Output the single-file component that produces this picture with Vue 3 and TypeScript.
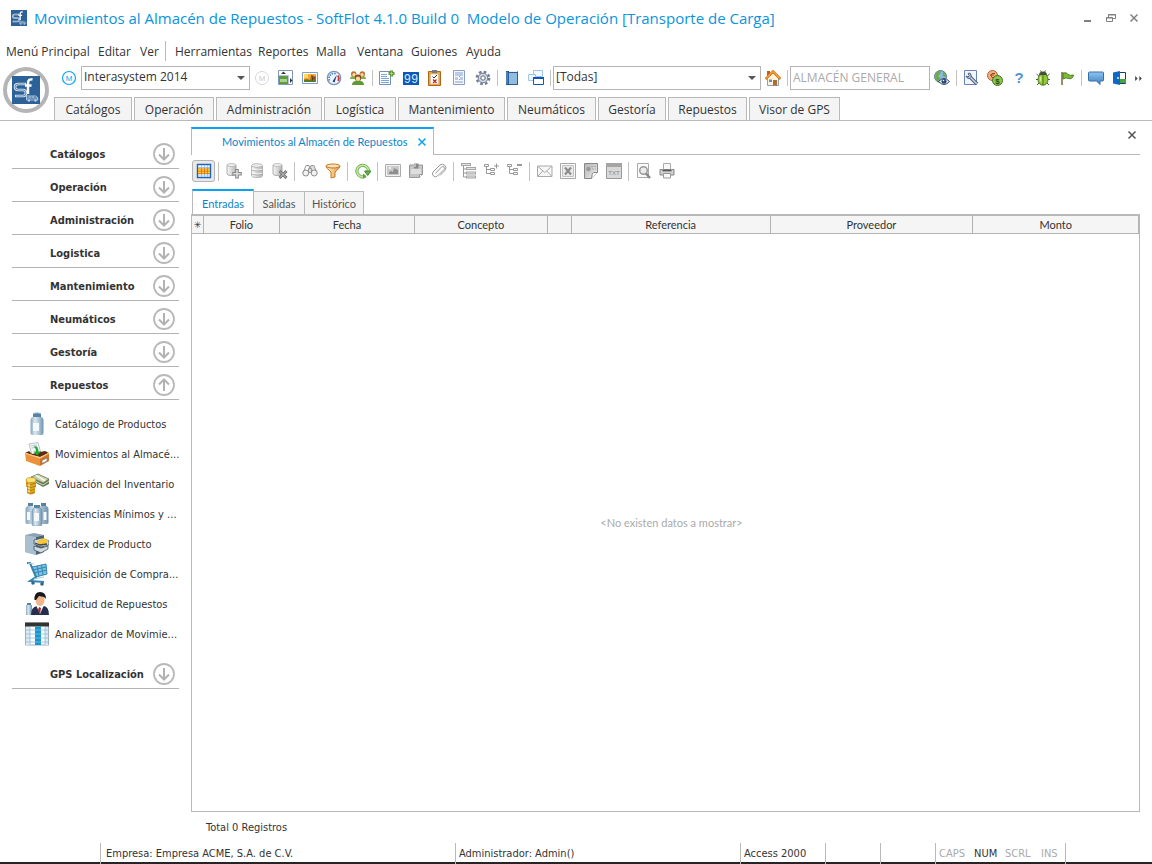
<script setup lang="ts">
import { h, ref } from 'vue'

interface Tool {
  icon: string
  label: string
}

interface Glyph {
  text: string
  y: number
  size: number
  fill: string
  x?: number
  family?: string
  weight?: number
}

// Lettering that sits on top of an icon's artwork.
const glyphs: Record<string, Glyph> = {
  'm-on': { text: 'M', y: 11, size: 8, fill: '#0ba5ec' },
  'm-off': { text: 'M', y: 11, size: 8, fill: '#cacaca' },
  counter: { text: '99', y: 13, size: 12, fill: '#d7ecff', family: 'Liberation Mono, monospace' },
  coins: { text: '$', x: 10.5, y: 13.5, size: 8, fill: '#24500c', weight: 700 },
  help: { text: '?', y: 13, size: 15, fill: '#4f93d8', weight: 700 },
  txt: { text: 'TXT', y: 12, size: 6, fill: '#888' },
}

const Icon = (props: { name: string }) => {
  const g = glyphs[props.name]
  return h('svg', { class: 'icon', viewBox: '0 0 16 16', 'aria-hidden': 'true' }, [
    h('use', { href: '#i-' + props.name }),
    g
      ? h('text', {
          x: g.x ?? 8,
          y: g.y,
          fill: g.fill,
          'text-anchor': 'middle',
          'font-family': g.family ?? 'Liberation Sans, sans-serif',
          'font-size': g.size,
          'font-weight': g.weight ?? 400,
        }, g.text)
      : null,
  ])
}
Icon.props = ['name']

const company = ref('Interasystem 2014')
const filter = ref('[Todas]')
const warehouse = ref('ALMACÉN GENERAL')

const menuLeft: string[] = ['Menú Principal', 'Editar', 'Ver']
const menuRight: string[] = ['Herramientas', 'Reportes', 'Malla', 'Ventana', 'Guiones', 'Ayuda']

const moduleTabs: string[] = [
  'Catálogos', 'Operación', 'Administración', 'Logística', 'Mantenimiento',
  'Neumáticos', 'Gestoría', 'Repuestos', 'Visor de GPS',
]

const toolsA: Tool[][] = [
  [
    { icon: 'm-off', label: 'Modelo' },
    { icon: 'layout', label: 'Distribución' },
    { icon: 'picture', label: 'Imagen' },
    { icon: 'gauge', label: 'Indicadores' },
    { icon: 'users', label: 'Usuarios' },
  ],
  [
    { icon: 'doc-add', label: 'Nuevo documento' },
    { icon: 'counter', label: 'Contador' },
    { icon: 'clipboard', label: 'Lista de tareas' },
    { icon: 'form', label: 'Formulario' },
    { icon: 'gear', label: 'Configuración' },
  ],
  [
    { icon: 'book', label: 'Libro' },
    { icon: 'windows', label: 'Ventanas' },
  ],
]

const toolsB: Tool[][] = [
  [
    { icon: 'wrench', label: 'Mantenimiento' },
    { icon: 'coins', label: 'Monedas' },
    { icon: 'help', label: 'Ayuda' },
    { icon: 'bug', label: 'Reportar error' },
    { icon: 'flag', label: 'Bandera' },
  ],
  [
    { icon: 'chat', label: 'Mensajes' },
    { icon: 'door', label: 'Salir' },
  ],
]

const gridTools: Tool[][] = [
  [
    { icon: 'db-add', label: 'Agregar registro' },
    { icon: 'db', label: 'Editar registro' },
    { icon: 'db-del', label: 'Eliminar registro' },
  ],
  [
    { icon: 'binoculars', label: 'Buscar' },
    { icon: 'funnel', label: 'Filtrar' },
  ],
  [{ icon: 'refresh', label: 'Actualizar' }],
  [
    { icon: 'picture-off', label: 'Imagen adjunta' },
    { icon: 'note', label: 'Nota' },
    { icon: 'clip', label: 'Adjuntar' },
  ],
  [
    { icon: 'tree', label: 'Agrupar' },
    { icon: 'tree-plus', label: 'Expandir' },
    { icon: 'tree-minus', label: 'Contraer' },
  ],
  [
    { icon: 'mail', label: 'Enviar por correo' },
    { icon: 'excel', label: 'Exportar a Excel' },
    { icon: 'html', label: 'Exportar a HTML' },
    { icon: 'txt', label: 'Exportar a texto' },
  ],
  [
    { icon: 'preview', label: 'Vista previa' },
    { icon: 'print', label: 'Imprimir' },
  ],
]

const sections: string[] = [
  'Catálogos', 'Operación', 'Administración', 'Logistica',
  'Mantenimiento', 'Neumáticos', 'Gestoría', 'Repuestos',
]
const openSection = ref('Repuestos')

const links: Tool[] = [
  { icon: 'jar', label: 'Catálogo de Productos' },
  { icon: 'drawer', label: 'Movimientos al Almacé...' },
  { icon: 'money', label: 'Valuación del Inventario' },
  { icon: 'jars', label: 'Existencias Mínimos y ...' },
  { icon: 'cabinet', label: 'Kardex de Producto' },
  { icon: 'cart', label: 'Requisición de Compra...' },
  { icon: 'person', label: 'Solicitud de Repuestos' },
  { icon: 'sheet', label: 'Analizador de Movimie...' },
]

const views: string[] = ['Entradas', 'Salidas', 'Histórico']
const activeView = ref('Entradas')
const columns: string[] = ['✳', 'Folio', 'Fecha', 'Concepto', '', 'Referencia', 'Proveedor', 'Monto']
</script>

<template>
  <div class="window">
    <svg class="defs" aria-hidden="true">
      <defs>
        <linearGradient id="gFunnel" x1="0" x2="1"><stop offset="0" stop-color="#fff0c8" /><stop offset="1" stop-color="#e89a38" /></linearGradient>
        <linearGradient id="gDb" x1="0" x2="1"><stop offset="0" stop-color="#f8f8f8" /><stop offset="1" stop-color="#b4b4b4" /></linearGradient>
        <linearGradient id="gJar" x1="0" x2="1"><stop offset="0" stop-color="#86a6bd" /><stop offset=".35" stop-color="#dce8f0" /><stop offset=".7" stop-color="#a3bfd2" /><stop offset="1" stop-color="#6f93ad" /></linearGradient>
        <linearGradient id="gBlue" x1="0" y1="0" x2="0" y2="1"><stop offset="0" stop-color="#8fc4f0" /><stop offset="1" stop-color="#3b7fc0" /></linearGradient>
        <linearGradient id="gPage" x1="0" y1="0" x2="1" y2="1"><stop offset="0" stop-color="#b8b8b8" /><stop offset=".5" stop-color="#d0d0d0" /><stop offset="1" stop-color="#f4f4f4" /></linearGradient>
      </defs>
      <symbol id="i-logo" viewBox="0 0 28 28">
        <path d="M0 0h28v28H0z" fill="#2c6298" />
        <path d="M14 8H6q-3 0-3 3t3 3h5q3 0 3 3t-3 3H3" fill="none" stroke="#d8e5f0" stroke-width="2.600" />
        <path d="M13 8H6q-3 0-3 3t3 3h5q3 0 3 3t-3 3H4" fill="none" stroke="#2c6298" stroke-width=".7" />
        <path d="M20.500 3.500q-4.500-1-4.500 4V18M13 9.500h6.500" fill="none" stroke="#fff" stroke-width="2.400" />
        <path d="M14.500 20h9q2.500.5 2.500 4H14.500zM14.500 22h11M18 20v2M21 20v2" fill="none" stroke="#b9d0e6" stroke-width=".9" />
        <circle cx="17" cy="24.500" r="1.200" fill="#b9d0e6" /><circle cx="23.500" cy="24.500" r="1.200" fill="#b9d0e6" />
      </symbol>
      <symbol id="i-m-on" viewBox="0 0 16 16"><circle cx="8" cy="8" r="6.500" fill="#fff" stroke="#0ba5ec" stroke-width="1.200" /></symbol>
      <symbol id="i-m-off" viewBox="0 0 16 16"><circle cx="8" cy="8" r="6.500" fill="#fff" stroke="#d6d6d6" /></symbol>
      <symbol id="i-layout" viewBox="0 0 16 16">
        <path d="M.5.5h14v14H.5z" fill="#fff" stroke="#8195bd" />
        <path d="M1 6h9v8H1z" fill="#5f9a3e" /><path d="M2 9h7v3H2z" fill="#a9d48e" /><path d="M1 5.500h9.500V14" fill="none" stroke="#b8c4da" />
        <path d="M5.500 1.500 8 4H3zM12 8l2.500 2.500L12 13z" fill="#333" />
      </symbol>
      <symbol id="i-picture" viewBox="0 0 16 16">
        <path d="M.5 2.500h15v11H.5z" fill="#fff" stroke="#7b9fc9" />
        <path d="M2 4h12v8H2z" fill="#f6a92a" /><path d="M2 4h4v4H2z" fill="#ffd95a" />
        <path d="M2 12V9.500l3-.5 3 1 1-4 2-1 1 2 2-1v6z" fill="#a8662a" /><path d="M2 12v-1.500l5-.5 7 1v1z" fill="#4e7d2c" /><path d="m9.500 5.500 1 2v3m1.500-4v3" stroke="#5c3a18" fill="none" />
      </symbol>
      <symbol id="i-gauge" viewBox="0 0 16 16">
        <circle cx="8" cy="8" r="6.700" fill="#eef5fd" stroke="#7d92b4" stroke-width="1.300" />
        <path d="M3.500 10.500A5 5 0 0 1 10 3.800" fill="none" stroke="#3f7fcf" stroke-width="1.600" stroke-dasharray="1.500 1" />
        <path d="M12 5.500q1.500 2.500.3 5.500" fill="none" stroke="#d43030" stroke-width="1.800" /><path d="m6.500 11.500 4.500-7-2.500 8z" fill="#1f3f7f" />
      </symbol>
      <symbol id="i-users" viewBox="0 0 16 16">
        <path d="M0 9q0-3 3.500-3T7 9zM9 9q0-3 3.500-3T16 9z" fill="#7cb342" />
        <circle cx="3.700" cy="4" r="2.700" fill="#b97432" /><circle cx="12.300" cy="4" r="2.700" fill="#b97432" /><circle cx="4" cy="4.800" r="1.700" fill="#fbd9a4" /><circle cx="12" cy="4.800" r="1.700" fill="#fbd9a4" />
        <path d="M2 15q0-4.500 6-4.500t6 4.500z" fill="#5b9b33" /><circle cx="8" cy="7.700" r="3.200" fill="#8d4a1d" /><circle cx="8" cy="8.700" r="2.200" fill="#fbd9a4" />
      </symbol>
      <symbol id="i-doc-add" viewBox="0 0 16 16">
        <path d="M.5 1.500h11v13H.5z" fill="#fff" stroke="#6f8fbf" /><path d="M2 4.500h6M2 6.500h6M2 8.500h8M2 10.500h8M2 12.500h8" stroke="#7aa5df" />
        <path d="M12.500.5v6M9.500 3.500h6" stroke="#5a8f35" stroke-width="3" /><path d="M12.500 1.500v4M10.500 3.500h4" stroke="#a5d65c" stroke-width="1.200" />
      </symbol>
      <symbol id="i-counter" viewBox="0 0 16 16"><path d="M0 2h16v13H0z" fill="#0d57b8" /></symbol>
      <symbol id="i-clipboard" viewBox="0 0 16 16">
        <path d="M1.500 1.500h12v14h-12z" fill="#f0a23c" stroke="#ad6615" /><path d="M3.500 4h8v10h-8z" fill="#fff" stroke="#d2b58a" stroke-width=".6" /><path d="M5 0h5v3H5z" fill="#737c88" />
        <path d="m5.500 6.500 1.500 1.500 3-3" fill="none" stroke="#333" /><path d="m6 9.500 3.500 3.500m0-3.500L6 13" stroke="#c32424" stroke-width="1.300" />
      </symbol>
      <symbol id="i-form" viewBox="0 0 16 16">
        <path d="M2.500.5h11v14h-11z" fill="#f4f7fc" stroke="#8a9ec8" /><path d="M4 2h8v4H4zM4 7h3v3H4zM9 7h3v3H9zM4 11h8v2H4z" fill="#b9cbe6" /><path d="M8 6.500h1M8 9.500h1" stroke="#8aa5d4" />
      </symbol>
      <symbol id="i-gear" viewBox="0 0 16 16">
        <circle cx="8" cy="8" r="6.200" fill="none" stroke="#707b90" stroke-width="2.300" stroke-dasharray="2.600 2.270" /><circle cx="8" cy="8" r="4.800" fill="#d5dbe6" stroke="#707b90" /><circle cx="8" cy="8" r="2.200" fill="#fff" stroke="#5d6880" />
      </symbol>
      <symbol id="i-book" viewBox="0 0 16 16">
        <path d="M2 1h12v14H2z" fill="#2a5d97" /><path d="M5 3h8v11H5z" fill="#8fbcdf" /><path d="M5 1.500h8.500" stroke="#e8f2fb" /><path d="M3 2v12" stroke="#73a2cd" />
      </symbol>
      <symbol id="i-windows" viewBox="0 0 16 16">
        <path d="M5.500.5h9v6h-9z" fill="#f3f9ff" stroke="#9cc6ee" /><path d="M.5 4.500h7v6h-7z" fill="#eef6ff" stroke="#9cc6ee" /><path d="M5.500 7.500h10v7h-10z" fill="#fff" stroke="#0d57b8" /><path d="M5 7h11v2H5z" fill="#0d57b8" />
      </symbol>
      <symbol id="i-home" viewBox="0 0 16 16">
        <path d="M2.500 8 8 3l5.500 5v7.500h-11z" fill="#fff3d9" stroke="#8e9fb8" /><path d="M2 1h3v4L2 8z" fill="#c05b28" />
        <path d="m.5 9 7.500-7.500L15.500 9" fill="none" stroke="#d9781a" stroke-width="2.600" /><path d="m1 8.500 7-7 7 7" fill="none" stroke="#ffbd4b" />
        <path d="M8 10h4v5.500H8z" fill="#b26b30" /><path d="M4 9.500h3V12H4z" fill="#5c93cf" />
      </symbol>
      <symbol id="i-globe" viewBox="0 0 16 16">
        <circle cx="6.500" cy="6.500" r="6" fill="#8bb9de" stroke="#597b9c" /><path d="M2 3q3-3 5-2L6 4 4 6l2 2v4Q1 11 1 7zM9 2q3 1 3 5L9 6z" fill="#6dab45" />
        <path d="M4.500 11.500q5.500-6 11 0-5.500 6-11 0z" fill="#e8eef6" stroke="#35496c" /><circle cx="10" cy="11.300" r="2.500" fill="#2b477b" /><circle cx="9.500" cy="10.500" r=".8" fill="#fff" />
      </symbol>
      <symbol id="i-wrench" viewBox="0 0 16 16">
        <path d="M1.500.5h12v14h-12z" fill="#f1f5fc" stroke="#6a83ba" /><path d="m7 7 7 7" stroke="#50607d" stroke-width="3.500" /><path d="M7.500 3.500q2 3-1 5-2.500.5-3.500-2.500l2 1 1.300-1.300L5 3.500q1.500-.7 2.500 0z" fill="#b9c7de" stroke="#50607d" /><path d="m7.500 7.500 6.300 6.300" stroke="#c5d2e6" stroke-width="1.500" />
      </symbol>
      <symbol id="i-coins" viewBox="0 0 16 16">
        <circle cx="5.500" cy="5.500" r="5" fill="#f3b183" stroke="#b95f25" /><path d="M8 3.500q-4-1-4 2t4 2M3 5h4" fill="none" stroke="#9f4716" /><circle cx="10.500" cy="10.500" r="5" fill="#8fc352" stroke="#42751b" />
      </symbol>
      <symbol id="i-help" viewBox="0 0 16 16"></symbol>
      <symbol id="i-bug" viewBox="0 0 16 16">
        <path d="M1.500 4 5 7M14.500 4 11 7M1 9.500h14M2 15l3.500-3.500M14 15l-3.500-3.500M5.500.5 7 3M10.500.5 9 3" stroke="#4b6430" /><ellipse cx="8" cy="9.500" rx="5" ry="5.700" fill="#95c83c" stroke="#47751d" /><path d="M4 5q0-3.500 4-3.500T12 5z" fill="#45503a" /><path d="M8 5v10" stroke="#47751d" /><path d="M5.500 6.500v5" stroke="#d9f08d" stroke-width="1.500" />
      </symbol>
      <symbol id="i-flag" viewBox="0 0 16 16">
        <path d="M3 2v13" stroke="#84704a" stroke-width="1.600" /><path d="M4 3q4-1 5 1.500 2 1.500 5.500.5-1 4.500-5 3.500Q7 7 4 9z" fill="#7dba36" stroke="#47801c" />
      </symbol>
      <symbol id="i-chat" viewBox="0 0 16 16">
        <path d="M1.500 2h13q1 0 1 1v7q0 1-1 1H12v3.500L8.500 11h-7q-1 0-1-1V3q0-1 1-1z" fill="url(#gBlue)" stroke="#386fa5" />
      </symbol>
      <symbol id="i-door" viewBox="0 0 16 16">
        <path d="M6 2.500h7.500v11H6z" fill="#fff" stroke="#1b3c6d" /><path d="M8 9h6v4H8z" fill="#45a833" /><path d="M1 2.500 8 1v14l-7-1.500z" fill="#1167c5" /><circle cx="6" cy="8" r=".9" fill="#fff" />
      </symbol>
      <symbol id="i-table" viewBox="0 0 16 16">
        <path d="M1.500 1.500h13v13h-13z" fill="#fff" stroke="#1d63b8" stroke-width="1.400" /><path d="M5.500 2v12M8.500 2v12M11.500 2v12M2 4.500h12M2 12h12" stroke="#8db6e6" stroke-width=".8" /><path d="M2 6h12v4.500H2z" fill="#ffd21f" /><path d="M2 5.800h12M2 10.500h12M2 8.200h12M5.500 6v4.500M8.500 6v4.500M11.500 6v4.500" stroke="#e06a10" stroke-width=".8" />
      </symbol>
      <symbol id="i-db" viewBox="0 0 16 16">
        <path d="M2.500 3v10q0 1.500 5.500 1.500t5.500-1.500V3z" fill="url(#gDb)" stroke="#aaa" stroke-width=".8" /><ellipse cx="8" cy="2.500" rx="5.500" ry="1.800" fill="#ededed" stroke="#aaa" stroke-width=".8" /><path d="M3 6.500q5 1.500 10 0M3 10.500q5 1.500 10 0" fill="none" stroke="#fff" /><path d="M3 7.300q5 1.500 10 0M3 11.300q5 1.500 10 0" fill="none" stroke="#999" stroke-width=".7" />
      </symbol>
      <symbol id="i-db-add" viewBox="0 0 16 16">
        <path d="M1 2v9q0 1.500 4.500 1.500T10 11V2z" fill="url(#gDb)" stroke="#999" stroke-width=".8" /><ellipse cx="5.500" cy="2" rx="4.500" ry="1.500" fill="#eee" stroke="#aaa" stroke-width=".7" /><path d="M11 6v9.500M6.300 10.700h9.500" stroke="#858585" stroke-width="3.600" /><path d="M11 7v7.500M7.200 10.700h7.600" stroke="#ddd" stroke-width="1.600" />
      </symbol>
      <symbol id="i-db-del" viewBox="0 0 16 16">
        <path d="M1 2v9q0 1.500 4.500 1.500T10 11V2z" fill="url(#gDb)" stroke="#999" stroke-width=".8" /><ellipse cx="5.500" cy="2" rx="4.500" ry="1.500" fill="#eee" stroke="#aaa" stroke-width=".7" /><path d="m7.500 8 7 7m0-7-7 7" stroke="#777" stroke-width="3" /><path d="m8 8.500 6 6m0-6-6 6" stroke="#c4c4c4" />
      </symbol>
      <symbol id="i-binoculars" viewBox="0 0 16 16">
        <path d="M4 2.500h3l1 3 1-3h3l3 7.500M4 2.500 1 10M6.500 5.500h3v4h-3z" fill="#dedede" stroke="#999" /><circle cx="3.800" cy="10" r="3" fill="#f2f2f2" stroke="#8c8c8c" /><circle cx="12.200" cy="10" r="3" fill="#f2f2f2" stroke="#8c8c8c" />
      </symbol>
      <symbol id="i-funnel" viewBox="0 0 16 16">
        <path d="M1 3q0 2 5 6v6l4-1V9q5-4 5-6z" fill="url(#gFunnel)" stroke="#c07828" /><ellipse cx="8" cy="3" rx="7" ry="2" fill="#fbe0b6" stroke="#c07828" />
      </symbol>
      <symbol id="i-refresh" viewBox="0 0 16 16">
        <path d="M10.500 13.200A5.800 5.800 0 1 1 13.500 8" fill="none" stroke="#6fae57" stroke-width="3.200" /><path d="M10.500 13.200A5.800 5.800 0 1 1 13.500 8" fill="none" stroke="#c6e8a2" stroke-width="1.600" /><path d="M9.500 8H16l-3.300 4.500z" fill="#69b544" stroke="#418730" /><path d="m8 10.500 3.500 2.700L8 15.800z" fill="#5ba53f" />
      </symbol>
      <symbol id="i-picture-off" viewBox="0 0 16 16">
        <path d="M.5 1.500h15v12H.5z" fill="#f1f1f1" stroke="#aaa" /><path d="M2 3h12v9H2z" fill="#c9c9c9" /><path d="M4 11V9l2-1 2 1 1-4 4 2v4z" fill="#8e8e8e" /><circle cx="5" cy="5" r="1.300" fill="#eee" />
      </symbol>
      <symbol id="i-note" viewBox="0 0 16 16">
        <path d="M1.500 2h13v9.500l-3 3h-10z" fill="#c5c5c5" stroke="#999" /><path d="M3 6h10v5H3z" fill="#dedede" /><path d="M6 .5h4.500v5H6z" fill="#888" /><path d="M7 1v3" stroke="#eee" /><path d="M14.500 11.500h-3v3" fill="#fff" stroke="#999" />
      </symbol>
      <symbol id="i-clip" viewBox="0 0 16 16">
        <path d="m4.500 10.500 6-6.500q1.500-1.200 2.500 0t0 2.500L6.500 13q-2 1.700-4 0T2 9L9 2q2.500-1.800 4.800.3t.2 5L9 12.500" fill="none" stroke="#999" />
      </symbol>
      <symbol id="i-tree" viewBox="0 0 16 16">
        <path d="M0 1.500h10M5 5.500h10M5 10h10M5 14h10" stroke="#a5a5a5" stroke-width="3" /><path d="M2.500 3v11H5M2.500 6H5M2.500 10H5" fill="none" stroke="#999" /><path d="M1 1.500h8M6 5.500h8M6 10h8M6 14h8" stroke="#e4e4e4" stroke-width="1" />
      </symbol>
      <symbol id="i-tree-plus" viewBox="0 0 16 16">
        <path d="M.5 1.500h4v2h-4zM6.500 5.500h4v2h-4zM6.500 9.500h4v2h-4zM2.500 4v6.500h4M2.500 6.500h4" fill="none" stroke="#999" /><path d="M12.500.5v5M10 3h5" stroke="#999" />
      </symbol>
      <symbol id="i-tree-minus" viewBox="0 0 16 16">
        <path d="M.5 1.500h4v2h-4zM6.500 5.500h4v2h-4zM6.500 9.500h4v2h-4zM2.500 4v6.500h4M2.500 6.500h4" fill="none" stroke="#999" /><path d="M10 2h5" stroke="#999" stroke-width="2" />
      </symbol>
      <symbol id="i-mail" viewBox="0 0 16 16">
        <path d="M.5 3h14.500v10.500H.5z" fill="#f7f7f7" stroke="#aaa" /><path d="m1 3.500 6.800 6L14.500 3.500M1 13l4.800-5M14.500 13 9.800 8" fill="none" stroke="#aaa" />
      </symbol>
      <symbol id="i-excel" viewBox="0 0 16 16">
        <path d="M.5.5h15v15H.5z" fill="#fafafa" stroke="#aaa" /><path d="M2.500 2.500h11v11h-11z" fill="#eaeaea" stroke="#c2c2c2" /><path d="m5 4.500 6 7m0-7-6 7" stroke="#8c8c8c" stroke-width="2.200" />
      </symbol>
      <symbol id="i-html" viewBox="0 0 16 16">
        <path d="M1.500.5h13v9l-6 6h-7z" fill="url(#gPage)" stroke="#888" /><path d="M14.500 9.500h-4q-1.500 0-2 6" fill="#fff" stroke="#888" /><circle cx="5.500" cy="6" r="2.200" fill="#989898" /><path d="M8 3.500h5M9 6h4" stroke="#aaa" stroke-dasharray="2 1" />
      </symbol>
      <symbol id="i-txt" viewBox="0 0 16 16">
        <path d="M.5.5h15v15H.5z" fill="#d8d8d8" stroke="#9a9a9a" /><path d="M0 0h16v4H0z" fill="#a5a5a5" />
      </symbol>
      <symbol id="i-preview" viewBox="0 0 16 16">
        <path d="M1.500 .5h11v14h-11z" fill="#fafafa" stroke="#aaa" /><circle cx="7.500" cy="7.500" r="3.800" fill="#ececec" stroke="#999" stroke-width="1.500" /><path d="m10 10.500 4 4.500" stroke="#888" stroke-width="2.500" />
      </symbol>
      <symbol id="i-print" viewBox="0 0 16 16">
        <path d="M4.500.5h7v6h-7z" fill="#f8f8f8" stroke="#aaa" /><path d="M1 6.500h2.500V8h9V6.500H15V12H1z" fill="#cfcfcf" stroke="#888" /><path d="M4 6.500h8V8H4z" fill="#555" /><path d="M4.500 10.500h7v4.500h-7z" fill="#f8f8f8" stroke="#999" />
      </symbol>
      <symbol id="i-jar" viewBox="0 0 24 24">
        <path d="M8 1h8v4H8z" fill="#5782a0" /><path d="M8 1.500q4-1.500 8 0" stroke="#a9c6da" fill="none" /><path d="M7.500 5h9q2 1 2 3v13q0 2-2 2h-9q-2 0-2-2V8q0-2 2-3z" fill="url(#gJar)" /><path d="M8 11h6v8H8z" fill="#f6f9fb" />
      </symbol>
      <symbol id="i-jars" viewBox="0 0 24 24">
        <path d="M3 1h5v3H3zM16 1h5v3h-5zM9 3h6v3H9z" fill="#5782a0" /><path d="M2.500 4h6q1 1 1 3v14q0 1-1 1h-6q-2 0-2-1V7q0-2 2-3zM15.500 4h6q2 1 2 3v14q0 1-2 1h-6q-1 0-1-1V7q0-2 1-3z" fill="url(#gJar)" /><path d="M9 6h6q2 1 2 3v13q0 2-2 2H9q-2 0-2-2V9q0-2 2-3z" fill="url(#gJar)" stroke="#698da8" stroke-width=".5" /><path d="M9 11h5v8H9zM2 10h3v8H2zM18.500 10h3v8h-3z" fill="#f6f9fb" />
      </symbol>
      <symbol id="i-drawer" viewBox="0 0 24 24">
        <path d="m4 2 9-1.500 3 11-9 2z" fill="#f3f5f6" stroke="#9caab4" stroke-width=".7" /><path d="m6 4 6-1M6.500 6l6-1" stroke="#afbdc5" stroke-width=".8" /><path d="m0 11 4-2 3 3 8-2 5-1 4 2-9 4z" fill="#5d2d0d" /><path d="m0 11 15 5v8L1 19z" fill="#eb9139" /><path d="m15 16 9-5v8l-9 5z" fill="#cf7427" /><path d="m0 11 15 5 9-5" fill="none" stroke="#f7c27b" stroke-width="1.300" /><path d="M17 18.500 22 16v3l-5 2.500z" fill="#fff" stroke="#6c6c6c" stroke-width=".6" /><path d="M9 4.500q4-1 4.500 5h2.500l-4 4-3.500-4H11q0-3-2-5z" fill="#21aa32" />
      </symbol>
      <symbol id="i-money" viewBox="0 0 24 24">
        <path d="m6 5 7-3 11 5v5l-6 3-9-5z" fill="#697d55" /><path d="m6 5 7-3 11 5-6 4z" fill="#c4d1ae" stroke="#58694a" stroke-width=".6" /><path d="m10 3.500 9 6 2-1.500-9-5z" fill="#f5f4e4" /><path d="m8 8 10 5 6-4" fill="none" stroke="#e4ead9" stroke-width=".8" /><path d="M1 8v6l1 1v6q4 3 8 0v-5l1-1V8z" fill="#dea51f" /><path d="M4 10v11" stroke="#f8dc74" stroke-width="2" /><ellipse cx="6" cy="8" rx="5" ry="2.500" fill="#ffe270" stroke="#b58210" stroke-width=".6" /><path d="M1 11q5 3 10 0M1 14q5 3 10 0M2 17q4 3 8 0M2 20q4 3 8 0" fill="none" stroke="#9e7110" stroke-width=".7" />
      </symbol>
      <symbol id="i-cabinet" viewBox="0 0 24 24">
        <path d="m0 3 9-2 10 2-8 2v18L0 20z" fill="#8ba2b4" /><path d="m0 3 11 2v18L0 20z" fill="#a9bfce" /><path d="m11 5 8-2v17l-8 3z" fill="#4e626f" /><path d="m9 8 8-2 7 3v4l-8 2-7-3zM9 14l7 2 7-2v3l-7 4-7-3z" fill="#cfd8de" stroke="#405564" stroke-width=".8" /><path d="m12 9 7-3 4 2-2 5-7 1z" fill="#f7c73a" /><path d="m10 11 5 2 7-1" fill="none" stroke="#354958" stroke-width="1.300" />
      </symbol>
      <symbol id="i-cart" viewBox="0 0 24 24">
        <path d="m7 5 14-3 1 10-11 3z" fill="#7cc0e2" /><path d="m7 5 14-3 1 10-11 3zM8 8l13-3M9 11l13-3M12 4l2 10M16.500 3l1.500 10" fill="none" stroke="#3587b4" /><path d="M2 1h3l6 14-6 4 14 1" fill="none" stroke="#3484af" stroke-width="2" /><path d="m3 1 6 1M9 17l10-2" stroke="#a2d1e7" /><circle cx="17" cy="22" r="1.800" fill="#2f6888" /><circle cx="8" cy="21" r="1.800" fill="#2f6888" />
      </symbol>
      <symbol id="i-person" viewBox="0 0 24 24">
        <path d="M2 11h4v2H2z" fill="#5782a0" /><path d="M1 13h6v10H1z" fill="url(#gJar)" /><path d="M6 23q0-8 6-9l4 2 3-2q5 1 5 9z" fill="#242f4e" /><path d="m11 13 4 9 4-9z" fill="#fff" /><path d="m14 15 2 1-1 6-2-4z" fill="#a92535" /><ellipse cx="15" cy="8" rx="4.500" ry="6" fill="#f2b489" /><path d="M9.500 8Q9 0 15 0t6 7l-2-2-5-1-3 4z" fill="#17171c" />
      </symbol>
      <symbol id="i-sheet" viewBox="0 0 24 24">
        <path d="M.5 1h23v22H.5z" fill="#fff" stroke="#9fb0bc" /><path d="M1 4h4v19H1zM20 4h3v19h-3z" fill="#dce9f2" /><path d="M0 .5h24v4H0z" fill="#333" /><path d="M10 4.500h6V23h-6z" fill="#1596cf" /><path d="M1 8h22M1 12h22M1 16h22M1 20h22M5 4.500V23M20 4.500V23" stroke="#8cbddb" stroke-width=".8" />
      </symbol>
      <symbol id="i-down" viewBox="0 0 22 22">
        <circle cx="11" cy="11" r="10" fill="#fff" stroke="#b9b9b9" stroke-width="1.800" /><path d="M11 5v11M6 11.500l5 5 5-5" fill="none" stroke="#b2b2b2" stroke-width="2" />
      </symbol>
      <symbol id="i-up" viewBox="0 0 22 22">
        <circle cx="11" cy="11" r="10" fill="#fff" stroke="#b9b9b9" stroke-width="1.800" /><path d="M11 17V6M6 10.500l5-5 5 5" fill="none" stroke="#b2b2b2" stroke-width="2" />
      </symbol>
      <symbol id="i-min" viewBox="0 0 12 12"><path d="M2 9h7" stroke="#808080" stroke-width="2" /></symbol>
      <symbol id="i-restore" viewBox="0 0 12 12"><path d="M1.500 5.500h6v4h-6zM3.500 5V2.500h7v4H8M3 3h8M1 6h7" fill="none" stroke="#808080" /></symbol>
      <symbol id="i-close" viewBox="0 0 12 12"><path d="m2.500 2.500 7 7m0-7-7 7" stroke="currentColor" stroke-width="1.500" /></symbol>
    </svg>

    <header>
      <div class="titlebar">
        <Icon name="logo" />
        <h1>Movimientos al Almacén de Repuestos - SoftFlot 4.1.0 Build 0 &nbsp;Modelo de Operación [Transporte de Carga]</h1>
        <div class="window-buttons">
          <button aria-label="Minimizar"><svg><use href="#i-min" /></svg></button>
          <button aria-label="Restaurar"><svg><use href="#i-restore" /></svg></button>
          <button aria-label="Cerrar"><svg><use href="#i-close" /></svg></button>
        </div>
      </div>

      <nav class="menubar" aria-label="Menú">
        <div class="menu-group"><button v-for="m in menuLeft" :key="m">{{ m }}</button></div>
        <div class="menu-group second"><button v-for="m in menuRight" :key="m">{{ m }}</button></div>
      </nav>

      <div class="ribbon">
        <div class="orb"><svg><use href="#i-logo" /></svg></div>
        <div class="ribbon-rows">
          <div class="toolbar">
            <button class="tool" aria-label="Modelo activo"><Icon name="m-on" /></button>
            <div class="combo company">
              <select v-model="company" aria-label="Compañía"><option>Interasystem 2014</option></select>
              <span class="arrow"></span>
            </div>
            <template v-for="(group, g) in toolsA" :key="g">
              <button v-for="t in group" :key="t.icon" class="tool" :aria-label="t.label"><Icon :name="t.icon" /></button>
              <span class="sep"></span>
            </template>
            <div class="combo filter">
              <select v-model="filter" aria-label="Filtro"><option>[Todas]</option></select>
              <span class="arrow"></span>
            </div>
            <button class="tool" aria-label="Inicio"><Icon name="home" /></button>
            <span class="sep"></span>
            <input v-model="warehouse" class="warehouse" type="text" aria-label="Almacén" disabled>
            <button class="tool" aria-label="Ver en mapa"><Icon name="globe" /></button>
            <template v-for="(group, g) in toolsB" :key="g">
              <span class="sep"></span>
              <button v-for="t in group" :key="t.icon" class="tool" :aria-label="t.label"><Icon :name="t.icon" /></button>
            </template>
            <button class="more" aria-label="Más opciones"><svg viewBox="0 0 8 6"><path d="m0 0 3 3-3 3zM5 0l3 3-3 3z" fill="#444" /></svg></button>
          </div>
          <nav class="module-tabs" aria-label="Módulos">
            <button v-for="t in moduleTabs" :key="t">{{ t }}</button>
          </nav>
        </div>
      </div>
    </header>

    <div class="body">
      <aside>
        <button v-for="s in sections" :key="s" class="section" @click="openSection = s">
          <span>{{ s }}</span>
          <svg><use :href="s === openSection ? '#i-up' : '#i-down'" /></svg>
        </button>
        <nav class="links" aria-label="Repuestos">
          <a v-for="l in links" :key="l.icon" href="#"><svg><use :href="'#i-' + l.icon" /></svg><span>{{ l.label }}</span></a>
        </nav>
        <button class="section"><span>GPS Localización</span><svg><use href="#i-down" /></svg></button>
      </aside>

      <main>
        <div class="doc-tabs">
          <div class="doc-tab">
            <span>Movimientos al Almacén de Repuestos</span>
            <button aria-label="Cerrar pestaña"><svg><use href="#i-close" /></svg></button>
          </div>
          <div class="doc-rest"><button aria-label="Cerrar documento"><svg><use href="#i-close" /></svg></button></div>
        </div>

        <div class="grid-tools">
          <button class="pressed" aria-label="Vista de tabla"><Icon name="table" /></button>
          <template v-for="(group, g) in gridTools" :key="g">
            <span class="sep"></span>
            <button v-for="t in group" :key="t.icon" class="tool" :aria-label="t.label"><Icon :name="t.icon" /></button>
          </template>
        </div>

        <div class="view-tabs">
          <button v-for="v in views" :key="v" :class="{ active: v === activeView }" @click="activeView = v">{{ v }}</button>
        </div>

        <div class="grid">
          <table>
            <thead>
              <tr><th v-for="(c, i) in columns" :key="i" :class="'c' + i">{{ c }}</th></tr>
            </thead>
            <tbody>
              <tr><td :colspan="columns.length">&lt;No existen datos a mostrar&gt;</td></tr>
            </tbody>
          </table>
        </div>
        <p class="total">Total 0 Registros</p>
      </main>
    </div>

    <footer>
      <span></span>
      <span>Empresa: Empresa ACME, S.A. de C.V.</span>
      <span>Administrador: Admin()</span>
      <span>Access 2000</span>
      <span></span>
      <span></span>
      <span class="keys"><i>CAPS</i><b>NUM</b><i>SCRL</i><i>INS</i></span>
      <span></span>
    </footer>
  </div>
</template>

<style>
body { margin: 0; background: #fff; }
</style>

<style scoped>
* { box-sizing: border-box; }
.window { min-height: 100vh; display: flex; flex-direction: column; background: #fff; color: #333; font: 12px/16px "Open Sans", "Noto Sans", sans-serif; }
.defs { position: absolute; width: 0; height: 0; }
button { padding: 0; border: 0; background: none; font: inherit; color: inherit; white-space: nowrap; }
.icon { display: block; width: 16px; height: 16px; flex: none; overflow: visible; }

.titlebar { display: flex; align-items: center; height: 36px; padding: 0 12px 0 11px; }
.titlebar h1 { margin: 0 0 0 7px; flex: 1; font-size: 15px; line-height: 22px; font-weight: 400; color: #0a94dd; white-space: nowrap; }
.window-buttons { display: flex; gap: 11px; color: #808080; }
.window-buttons svg { display: block; width: 12px; height: 12px; }

.menubar { display: flex; align-items: center; height: 30px; padding-left: 6px; }
.menu-group { display: grid; grid-template-columns: 92px 42px 25px; height: 20px; padding-top: 2px; align-items: center; }
.menu-group.second { grid-template-columns: 83px 58px 41px 54px 55px 40px; padding-left: 9px; border-left: 1px solid #b9b9b9; }
.menu-group button { text-align: left; }

.ribbon { display: flex; height: 55px; border-bottom: 1px solid #b9b9b9; }
.orb { flex: none; width: 46px; height: 46px; margin: 1px 5px 0 3px; border: 4px solid #b5b5b5; border-radius: 50%; display: grid; place-items: center; background: #fff; }
.orb svg { width: 28px; height: 28px; }
.ribbon-rows { flex: 1; min-width: 0; display: flex; flex-direction: column; justify-content: space-between; }
.toolbar { display: flex; align-items: center; height: 24px; padding-left: 3px; }
.tool { display: grid; place-items: center; flex: none; width: 24px; height: 24px; }
.sep { flex: none; width: 5px; height: 16px; background: linear-gradient(#c2c2c2, #c2c2c2) center / 1px 100% no-repeat; }
.combo { position: relative; height: 24px; }
.company { flex: 169 1 0; }
.filter { flex: 208 1 0; }
.combo select { appearance: none; width: 100%; height: 24px; padding: 0 18px 2px 2px; border: 1px solid #b5b5b5; border-radius: 0; background: #fff; font: inherit; color: #333; }
.arrow { position: absolute; right: 5px; top: 10px; border: 4px solid transparent; border-top-color: #555; border-bottom: 0; pointer-events: none; }
.warehouse { flex: 134 1 0; min-width: 0; height: 24px; padding: 0 2px 2px; border: 1px solid #b5b5b5; background: #fff; font: inherit; color: #aaa; }
.more { flex: none; width: 20px; display: grid; place-items: center start; padding-left: 3px; }
.more svg { width: 7px; height: 5px; }
.module-tabs { display: grid; grid-template-columns: 78px 80px 106px 72px 107px 89px 68px 79px 91px; gap: 2px; height: 23px; }
.module-tabs button { padding-top: 2px; border: 1px solid #b9b9b9; border-bottom: 0; background: #f4f4f4; }

.body { flex: 1; display: flex; }
aside { flex: none; width: 179px; padding: 15px 0 0 12px; }
.section { display: flex; align-items: center; width: 100%; height: 33px; padding: 4px 4px 0 38px; border-bottom: 1px solid #b3b3b3; font: bold 11px/14px "DejaVu Sans Condensed", "DejaVu Sans", sans-serif; }
.section span { flex: 1; padding-top: 2px; text-align: left; }
.section svg { width: 22px; height: 22px; flex: none; }
.links { padding: 9px 0 7px 13px; }
.links a { display: flex; align-items: center; gap: 6px; height: 30px; color: #333; text-decoration: none; font: 11px/14px "DejaVu Sans Condensed", "DejaVu Sans", sans-serif; white-space: nowrap; }
.links span { padding-top: 2px; }
.links svg { width: 24px; height: 24px; flex: none; }

main { flex: 1; min-width: 0; display: flex; flex-direction: column; margin: 6px 12px 0; font: 11px/14px Lato, "Liberation Sans", sans-serif; }
.doc-tabs { display: flex; height: 28px; }
.doc-tab { display: flex; align-items: center; gap: 8px; width: 243px; padding: 0 8px 0 30px; border: 1px solid #b9b9b9; border-top: 2px solid #0aa2f2; border-bottom: 0; color: #0a84cc; }
.doc-tab span { white-space: nowrap; }
.doc-tab button { color: #0aa2e8; }
.doc-tab svg, .doc-rest svg { display: block; width: 12px; height: 12px; }
.doc-rest { flex: 1; display: flex; justify-content: flex-end; align-items: flex-start; padding: 2px 2px 0; border-bottom: 1px solid #b9b9b9; color: #555; }
.grid-tools { display: flex; align-items: center; height: 34px; padding-bottom: 2px; }
.grid-tools .tool { width: 23px; }
.grid-tools .sep { width: 7px; height: 19px; }
.pressed { display: grid; place-items: center; width: 23px; height: 22px; margin-left: 1px; border: 1px solid #b3b3b3; border-radius: 3px; background: #e9e9e9; }
.view-tabs { display: flex; align-items: flex-end; height: 25px; padding-left: 1px; }
.view-tabs button { width: 51px; height: 23px; padding-top: 2px; border: 1px solid #b9b9b9; border-left: 0; border-bottom: 0; background: #f4f4f4; color: #555; }
.view-tabs button.active { width: 62px; height: 25px; border-top: 2px solid #0aa2f2; border-left: 1px solid #b9b9b9; background: #fff; color: #0a84cc; }
.view-tabs button:last-child { width: 59px; }
.grid { flex: 1; display: flex; border: 1px solid #b9b9b9; }
table { width: 100%; table-layout: fixed; border-collapse: separate; border-spacing: 0; border-top: 1px solid #b9b9b9; }
thead tr { height: 18px; }
th { height: 18px; padding: 0; border-right: 1px solid #b3b3b3; border-bottom: 1px solid #b3b3b3; background: #f5f5f5; font-weight: 400; }
.c0 { width: 12px; font-size: 9px; font-family: "DejaVu Sans", sans-serif; line-height: 12px; }
.c1 { width: 8%; }
.c2 { width: 14.3%; }
.c3 { width: 14%; }
.c4 { width: 24px; }
.c5 { width: 21%; }
.c6 { width: 21.4%; }
td { padding: 0 0 0 12px; text-align: center; vertical-align: middle; color: #aaa; }
.total { margin: 8px 0 0 15px; height: 23px; font: 11px/16px "DejaVu Sans Condensed", sans-serif; }

footer { display: grid; grid-template-columns: 100px 355fr 285fr 85px 55px 55px 130px 87px; height: 21px; border-bottom: 2px solid #252525; font: 11px/20px "DejaVu Sans Condensed", sans-serif; white-space: nowrap; }
footer > span { padding-top: 1px; }
footer > span + span { padding-left: 3px; border-left: 1px solid #b9b9b9; }
footer > span:nth-child(2) { padding-left: 5px; }
.keys { display: grid; grid-template-columns: 35px 31px 36px 20px; color: #aaa; }
.keys i { font-style: normal; }
.keys b { font-weight: 400; color: #333; }
</style>
